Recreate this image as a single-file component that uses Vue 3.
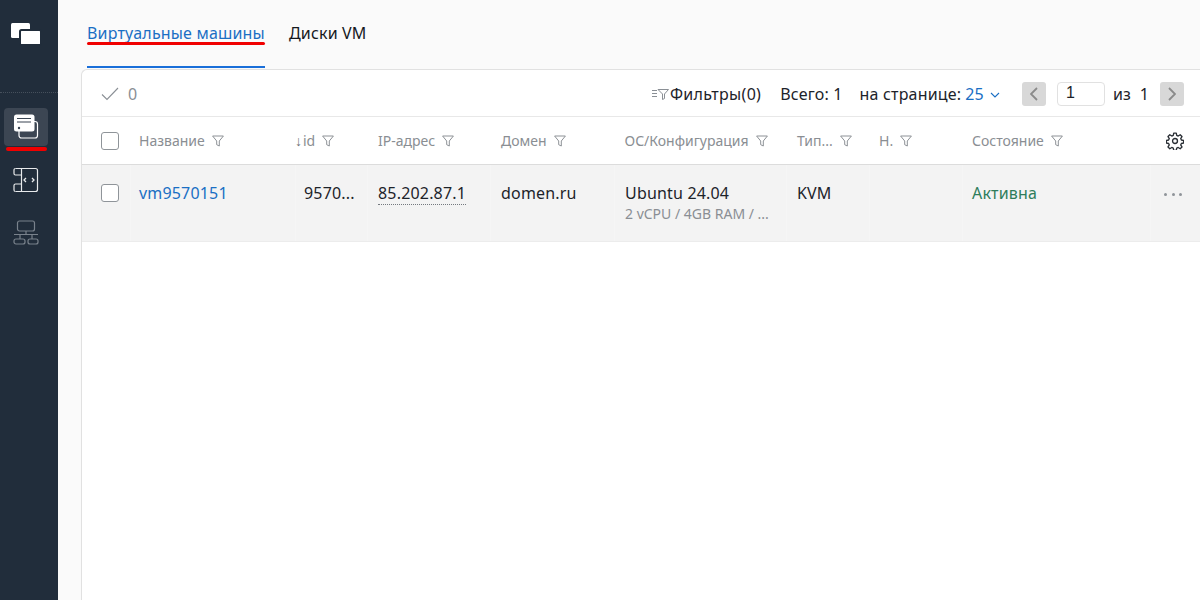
<script setup>
const columns = [
  { key: 'name', label: 'Название', width: 165 },
  { key: 'id', label: 'id', width: 74, sort: true },
  { key: 'ip', label: 'IP-адрес', width: 123 },
  { key: 'domain', label: 'Домен', width: 123.5 },
  { key: 'os', label: 'ОС/Конфигурация', width: 172.5 },
  { key: 'type', label: 'Тип...', width: 82 },
  { key: 'n', label: 'Н.', width: 93 },
  { key: 'state', label: 'Состояние', width: 194 },
]
</script>

<template>
  <div class="page">
    <aside class="sidebar">
      <div class="logo">
        <svg width="32" height="24" viewBox="0 0 32 24">
          <rect x="1" y="1" width="19" height="15" rx="1.5" fill="#fff" />
          <rect x="10" y="8" width="21" height="15" rx="1.5" fill="#fff" stroke="#212d3b" stroke-width="2" />
        </svg>
      </div>
      <nav class="nav">
        <div class="nav-item active">
          <svg width="26" height="26" viewBox="0 0 26 26" fill="none">
            <rect x="6" y="7.500" width="18.500" height="16.500" rx="2.500" stroke="#fff" stroke-width="1.200" />
            <rect x="1" y="0.500" width="20.500" height="17" rx="2.500" fill="#fff" />
            <path d="M4 4.500h14M4 8h14" stroke="#3a4552" stroke-width="1.200" />
            <circle cx="6" cy="14" r="1.200" fill="#3a4552" />
          </svg>
        </div>
        <span class="nav-mark"></span>
        <div class="nav-item">
          <svg width="26" height="26" viewBox="0 0 26 26" fill="none" stroke="#e8eaec" stroke-width="1.200">
            <path d="M2.500 1.500h20a2 2 0 0 1 2 2v19a2 2 0 0 1-2 2h-20" />
            <path d="M2.500 1.500a1.500 1.500 0 0 0-1.500 1.500v3.500a1.500 1.500 0 0 0 1.500 1.500h6M2.500 17a1.500 1.500 0 0 0-1.500 1.500V23a1.500 1.500 0 0 0 1.500 1.500M8.500 1.500v23M2.500 17h6" />
            <path d="M13 11l-2 2 2 2M19 11l2 2-2 2" stroke-width="1.300" />
          </svg>
        </div>
        <div class="nav-item dim">
          <svg width="26" height="26" viewBox="0 0 26 26" fill="none" stroke="#79828c" stroke-width="1.200">
            <rect x="4.500" y="1" width="17" height="10" rx="2" />
            <path d="M13 11v3.500M1 14.500h24M7 14.500v4.500M19 14.500v4.500" />
            <rect x="1" y="19" width="11" height="5" rx="2" />
            <rect x="15" y="19" width="10" height="5" rx="2" />
          </svg>
        </div>
      </nav>
    </aside>

    <main class="main">
      <div class="tabs">
        <div class="tab active">
          Виртуальные машины
          <span class="red-line"></span>
        </div>
        <div class="tab">Диски VM</div>
      </div>

      <section class="card">
        <div class="toolbar">
          <div class="selected">
            <svg width="18" height="14" viewBox="0 0 18 14" fill="none">
              <path d="M1 7.500l5 5L17 1" stroke="#8a8f95" stroke-width="1.100" />
            </svg>
            <span>0</span>
          </div>
          <div class="tools">
            <div class="filters">
              <svg width="17" height="12" viewBox="0 0 17 12" fill="none" stroke="#8a8f95" stroke-width="1">
                <path d="M0 2.500h5M0 5.500h5M0 8.500h5M6 1.500h10.500l-4 4.500v4.500l-2 1V6z" />
              </svg>
              <span>Фильтры(0)</span>
            </div>
            <span class="total">Всего: 1</span>
            <div class="per-page">
              на странице:
              <span class="blue">25</span>
              <svg width="10" height="6" viewBox="0 0 10 6" fill="none">
                <path d="M1 1l4 4 4-4" stroke="#1a6fc4" stroke-width="1.100" />
              </svg>
            </div>
            <div class="pager">
              <button class="page-btn">
                <svg width="8" height="14" viewBox="0 0 8 14" fill="none"><path d="M7 1L1 7l6 6" stroke="#8a8a8a" stroke-width="1.800" /></svg>
              </button>
              <div class="page-input">1</div>
              <span class="of">из&nbsp; 1</span>
              <button class="page-btn">
                <svg width="8" height="14" viewBox="0 0 8 14" fill="none"><path d="M1 1l6 6-6 6" stroke="#8a8a8a" stroke-width="1.800" /></svg>
              </button>
            </div>
          </div>
        </div>

        <div class="thead">
          <div class="check-cell"><span class="checkbox"></span></div>
          <div v-for="c in columns" :key="c.key" class="th" :style="{ width: c.width + 'px' }">
            <span v-if="c.sort" class="sort">↓</span>{{ c.label }}
            <svg class="funnel" width="12" height="12" viewBox="0 0 12 12" fill="none">
              <path d="M.6 1h10.800L7.300 6v5L4.700 9.700V6z" stroke="#8d9196" stroke-width="1" />
            </svg>
          </div>
          <div class="gear-cell">
            <svg width="18" height="18" viewBox="0 0 24 24" fill="none" stroke="#2a2f35" stroke-width="1.800">
              <circle cx="12" cy="12" r="3.300" />
              <path d="M10.300 1.500h3.400l.6 3 2 .9 2.600-1.700 2.400 2.400-1.700 2.600.9 2 3 .6v3.400l-3 .6-.9 2 1.700 2.600-2.400 2.400-2.600-1.700-2 .9-.6 3h-3.400l-.6-3-2-.9-2.600 1.700-2.400-2.400 1.700-2.600-.9-2-3-.6v-3.400l3-.6.9-2-1.700-2.600 2.400-2.400 2.600 1.700 2-.9z" stroke-linejoin="round" />
            </svg>
          </div>
        </div>

        <div class="row">
          <div class="row-check"><span class="checkbox"></span></div>
          <div class="td c-name link">vm9570151</div>
          <div class="td c-id">9570...</div>
          <div class="td c-ip"><span class="ip">85.202.87.1</span></div>
          <div class="td c-domain">domen.ru</div>
          <div class="td c-os">
            <div>Ubuntu 24.04</div>
            <div class="sub">2 vCPU / 4GB RAM / ...</div>
          </div>
          <div class="td c-type">KVM</div>
          <div class="td c-n"></div>
          <div class="td c-state green">Активна</div>
          <div class="td c-dots"><i></i><i></i><i></i></div>
        </div>
      </section>
    </main>
  </div>
</template>

<style>
html, body { margin: 0; overflow: hidden; }
</style>

<style scoped>
.page {
  display: flex;
  width: 1200px;
  height: 600px;
  overflow: hidden;
  font-family: "Noto Sans", sans-serif;
  font-size: 16px;
  letter-spacing: 0.18px;
  color: #1d232a;
  background: #fafafa;
}
.sidebar {
  width: 58px;
  flex: none;
  background: #212d3b;
}
.logo {
  height: 93px;
  box-sizing: border-box;
  padding: 22px 0 0 10px;
  border-bottom: 1px dotted #46505c;
}
.nav {
  position: relative;
  display: flex;
  flex-direction: column;
  padding: 15px 0 0 4px;
}
.nav-item {
  box-sizing: border-box;
  width: 44px;
  height: 39px;
  display: flex;
  align-items: center;
  justify-content: center;
  margin-bottom: 14px;
  border-radius: 4px;
}
.nav-item.active {
  height: 38px;
  background: #3c4653;
  margin-bottom: 14px;
}
.nav-mark {
  position: absolute;
  left: 6px;
  top: 54px;
  width: 41px;
  height: 4px;
  border-radius: 2px;
  background: #f00000;
}
.main {
  flex: 1;
  min-width: 0;
  padding-left: 23px;
}
.tabs {
  display: flex;
  gap: 24px;
  height: 68px;
  margin-left: 6px;
}
.tab {
  position: relative;
  box-sizing: border-box;
  height: 68px;
  padding-top: 22px;
  line-height: 22px;
  white-space: nowrap;
  color: #15191e;
}
.tab.active {
  color: #1a6fc4;
  border-bottom: 2px solid #1a6fd9;
}
.red-line {
  position: absolute;
  left: 0;
  right: 0;
  top: 41.500px;
  height: 3.500px;
  border-radius: 2px;
  background: #f00000;
}
.card {
  box-sizing: border-box;
  height: 540px;
  margin-top: 1px;
  padding-top: 1px;
  background: #fff;
  border: 1px solid #e1e1e1;
  border-right: 0;
  border-bottom: 0;
  border-top-left-radius: 6px;
}
.toolbar {
  display: flex;
  align-items: center;
  justify-content: space-between;
  height: 46px;
  box-sizing: border-box;
  padding: 0 16px 0 19px;
  border-bottom: 1px solid #e8e8e8;
}
.selected {
  display: flex;
  align-items: center;
  gap: 9px;
  color: #8a8f95;
}
.tools {
  display: flex;
  align-items: center;
  white-space: nowrap;
}
.filters {
  display: flex;
  align-items: center;
  gap: 1px;
  letter-spacing: 0.3px;
}
.total { margin-left: 19px; }
.per-page {
  display: flex;
  align-items: center;
  gap: 4px;
  margin-left: 17px;
}
.blue { color: #1a6fc4; }
.per-page svg { margin-left: 2px; margin-top: 2px; }
.pager {
  display: flex;
  align-items: center;
  margin-left: 22px;
}
.page-btn {
  width: 24px;
  height: 24px;
  padding: 0;
  display: flex;
  align-items: center;
  justify-content: center;
  border: 0;
  border-radius: 3px;
  background: #d8d8d8;
}
.page-input {
  box-sizing: border-box;
  width: 48px;
  height: 24px;
  margin-left: 11px;
  padding-left: 8px;
  line-height: 20px;
  border: 1px solid #e1e1e1;
  border-radius: 4px;
  font-family: "Liberation Sans", sans-serif;
}
.of {
  margin-left: 8px;
  margin-right: 11px;
}
.thead, .row {
  display: flex;
}
.thead {
  align-items: center;
  height: 48px;
  border-bottom: 1px solid #dcdcdc;
  box-sizing: border-box;
}
.check-cell {
  width: 57px;
  flex: none;
  padding-left: 19px;
  box-sizing: border-box;
}
.checkbox {
  display: block;
  box-sizing: border-box;
  width: 18px;
  height: 18px;
  border: 1px solid #8f9499;
  border-radius: 3px;
  background: #fff;
}
.th {
  flex: none;
  box-sizing: border-box;
  display: flex;
  align-items: center;
  font-size: 14px;
  letter-spacing: 0;
  color: #8a8e93;
  white-space: nowrap;
}
.sort {
  margin-left: -9px;
  width: 8px;
  font-size: 14px;
  color: #6f7378;
}
.funnel { margin-left: 7px; margin-top: 1px; }
.gear-cell {
  flex: none;
  height: 18px;
}
.row {
  height: 77px;
  background: #f3f3f3;
  border-bottom: 1px solid #ececec;
  box-sizing: border-box;
}
.row-check {
  width: 48px;
  flex: none;
  box-sizing: border-box;
  padding: 19px 0 0 19px;
}
.td {
  flex: none;
  box-sizing: border-box;
  padding-top: 17px;
  line-height: 22px;
  white-space: nowrap;
  border-left: 1px solid #f5f5f5;
}
.c-name { width: 165px; padding-left: 8px; }
.c-id { width: 72px; padding-left: 8px; }
.c-ip { width: 123px; padding-left: 10px; }
.c-domain { width: 124px; padding-left: 10px; }
.c-os { width: 172px; padding-left: 10px; }
.c-type { width: 83px; padding-left: 10px; }
.c-n { width: 93px; }
.c-state { width: 188px; padding-left: 9px; }
.link { color: #1a6fc4; }
.green { color: #2e7d5b; }
.ip { border-bottom: 1px dotted #74797f; display: inline-block; line-height: 19px; padding-bottom: 1px; }
.sub {
  font-size: 14px;
  letter-spacing: 0;
  color: #8a8e93;
  line-height: 20px;
}
.c-dots {
  display: flex;
  gap: 4.500px;
  flex: 1;
  padding: 28px 0 0 13px;
}
.c-dots i {
  width: 3px;
  height: 3px;
  border-radius: 50%;
  background: #8f9499;
}
</style>
